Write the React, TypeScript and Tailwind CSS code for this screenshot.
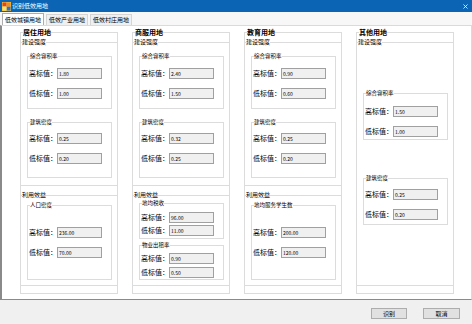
import type { ReactNode } from 'react';

type SubProps = {
  title: string;
  box: string; // margin + height of the group box
  body: string; // top padding + gap of the two rows
  high: string;
  low: string;
};

type Column = {
  title: string;
  build: { box: string; subs: SubProps[] };
  benefit?: SubProps[];
};

const columns: Column[] = [
  {
    title: '居住用地',
    build: {
      box: 'mt-[2px] h-[148px]',
      subs: [
        { title: '综合容积率', box: 'mt-[6px] h-[57px]', body: 'pt-[8px] gap-[9px]', high: '1.80', low: '1.00' },
        { title: '建筑密度', box: 'mt-[9px] h-[60px]', body: 'pt-[7px] gap-[9px]', high: '0.25', low: '0.20' },
      ],
    },
    benefit: [
      { title: '人口密度', box: 'mt-[2px] h-[79px]', body: 'pt-[18px] gap-[9px]', high: '236.00', low: '70.00' },
    ],
  },
  {
    title: '商服用地',
    build: {
      box: 'mt-[2px] h-[148px]',
      subs: [
        { title: '综合容积率', box: 'mt-[6px] h-[57px]', body: 'pt-[8px] gap-[9px]', high: '2.40', low: '1.50' },
        { title: '建筑密度', box: 'mt-[9px] h-[60px]', body: 'pt-[7px] gap-[9px]', high: '0.32', low: '0.25' },
      ],
    },
    benefit: [
      { title: '地均税收', box: 'mt-0 h-[40px]', body: 'pt-[5px] gap-[2px]', high: '96.00', low: '11.00' },
      { title: '物业出租率', box: 'mt-[2px] h-[39px]', body: 'pt-[4px] gap-[3px]', high: '0.90', low: '0.50' },
    ],
  },
  {
    title: '教育用地',
    build: {
      box: 'mt-[2px] h-[148px]',
      subs: [
        { title: '综合容积率', box: 'mt-[6px] h-[57px]', body: 'pt-[8px] gap-[9px]', high: '0.90', low: '0.60' },
        { title: '建筑密度', box: 'mt-[9px] h-[60px]', body: 'pt-[7px] gap-[9px]', high: '0.25', low: '0.20' },
      ],
    },
    benefit: [
      { title: '地均服务学生数', box: 'mt-[2px] h-[79px]', body: 'pt-[18px] gap-[9px]', high: '200.00', low: '120.00' },
    ],
  },
  {
    title: '其他用地',
    build: {
      box: 'mt-[2px] h-[248px]',
      subs: [
        { title: '综合容积率', box: 'mt-[43px] h-[51px]', body: 'pt-[9px] gap-[9px]', high: '1.50', low: '1.00' },
        { title: '建筑密度', box: 'mt-[34px] h-[51px]', body: 'pt-[7px] gap-[9px]', high: '0.25', low: '0.20' },
      ],
    },
  },
];

function Field({ label, value }: { label: string; value: string }) {
  return (
    <div className="flex items-center">
      <span className="w-[28px] whitespace-nowrap text-[7px] leading-[11px] text-black">{label}</span>
      <div className="h-[11px] w-[45px] border border-[#a0a0a0] bg-[#f0f0f0] pl-[1px] text-[5px] leading-[9px] text-black">
        {value}
      </div>
    </div>
  );
}

function SubBox({ title, box, body, high, low }: SubProps) {
  return (
    <fieldset className={`ml-[6px] w-[85px] border border-[#dcdcdc] ${box}`}>
      <legend className="ml-[2px] text-[5.5px] leading-[8px] text-black">{title}</legend>
      <div className={`flex flex-col pl-[1px] ${body}`}>
        <Field label="高标值：" value={high} />
        <Field label="低标值：" value={low} />
      </div>
    </fieldset>
  );
}

function Group({ title, box, children }: { title: string; box: string; children: ReactNode }) {
  return (
    <fieldset className={`-mx-px flex flex-col border border-[#dcdcdc] ${box}`}>
      <legend className="ml-[1px] text-[6px] leading-[8px] text-black">{title}</legend>
      {children}
    </fieldset>
  );
}

function AppIcon() {
  return (
    <svg width="9" height="9" viewBox="0 0 9 9">
      <rect x="0" y="0" width="9" height="9" fill="#f3c33a" />
      <rect x="0.5" y="0.5" width="4" height="4" fill="#e2432f" />
      <rect x="4.5" y="4.5" width="4" height="4" fill="#2f6fd0" />
      <rect x="0.5" y="4.5" width="4" height="4" fill="#f6e27a" />
      <rect x="4.5" y="0.5" width="4" height="4" fill="#f08a2c" />
    </svg>
  );
}

export default function App() {
  return (
    <div className="flex h-[324px] w-[472px] flex-col bg-[#f0f0f0] font-['Noto_Sans_CJK_SC','Noto_Sans',sans-serif] text-black">
      {/* title bar */}
      <div className="flex h-[12px] items-center bg-[#0c64b4] pl-[2px] pr-[4px]">
        <AppIcon />
        <span className="ml-[1px] text-[6px] leading-[12px] text-white">识别低效用地</span>
        <svg className="ml-auto" width="5" height="5" viewBox="0 0 5 5">
          <path d="M0.5 0.5 L4.5 4.5 M4.5 0.5 L0.5 4.5" stroke="white" strokeWidth="0.8" />
        </svg>
      </div>

      {/* tabs */}
      <div className="flex h-[13px] items-end gap-[2px] bg-[#f7f7f7] pl-[2px]">
        <div className="flex h-[12px] w-[42px] items-center justify-center border border-b-0 border-[#adadad] bg-white text-[6px] leading-[10px]">
          低效城镇用地
        </div>
        <div className="flex h-[11px] w-[42px] items-center justify-center border border-b-0 border-[#d5d5d5] bg-[#f0f0f0] text-[6px] leading-[10px]">
          低效产业用地
        </div>
        <div className="flex h-[11px] w-[42px] items-center justify-center border border-b-0 border-[#d5d5d5] bg-[#f0f0f0] text-[6px] leading-[10px]">
          低效村庄用地
        </div>
      </div>

      {/* tab page */}
      <div className="flex h-[275px] gap-[14px] border-l-2 border-r border-t border-b border-l-[#8a8a8a] border-r-[#dadada] border-t-[#dadada] border-b-[#8a8a8a] bg-white pl-[18px] pt-[2px]">
        {columns.map((col) => (
          <fieldset key={col.title} className="flex h-[266px] w-[98px] flex-col border border-[#dcdcdc]">
            <legend className="ml-[2px] text-[7px] font-bold leading-[8px] text-black">{col.title}</legend>
            <Group title="建设强度" box={col.build.box}>
              {col.build.subs.map((s) => (
                <SubBox key={s.title} {...s} />
              ))}
            </Group>
            {col.benefit && (
              <Group title="利用效益" box="mt-[5px] h-[95px]">
                {col.benefit.map((s) => (
                  <SubBox key={s.title} {...s} />
                ))}
              </Group>
            )}
          </fieldset>
        ))}
      </div>

      {/* buttons */}
      <div className="flex flex-1 items-start justify-end gap-[16px] pr-[12px] pt-[8px]">
        <button className="h-[11px] w-[36px] border border-[#adadad] bg-[#e1e1e1] text-[6px] leading-[9px]">识别</button>
        <button className="h-[11px] w-[37px] border border-[#adadad] bg-[#e1e1e1] text-[6px] leading-[9px]">取消</button>
      </div>
    </div>
  );
}
